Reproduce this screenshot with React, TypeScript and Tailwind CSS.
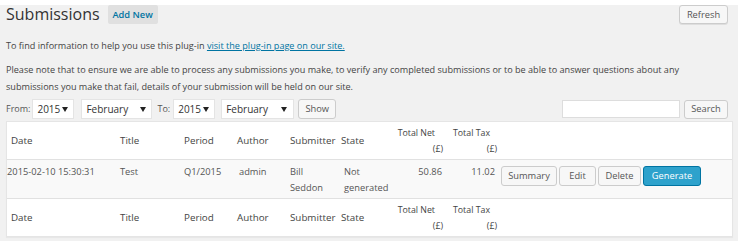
import React from 'react';

const font = { fontFamily: '"Open Sans", "Liberation Sans", sans-serif' };

const Select = ({ value, className }: { value: string; className: string }) => (
  <div className={`flex h-[20px] items-center bg-white border border-[#e4e4e4] pl-[4px] text-[10px] text-[#333] ${className}`}>
    <span>{value}</span>
    <svg className="ml-auto" width="6" height="5" viewBox="0 0 6 5">
      <path d="M0 0h6L3 5z" fill="#222" />
    </svg>
  </div>
);

const cols = 'grid grid-cols-[108px_64px_53px_53px_51px_59px_53px_52px_1fr]';

const HeadRow = () => (
  <div className={`${cols} h-[37px] items-center text-[9.8px] leading-[16px] text-[#444]`}>
    <div className="pl-[4px]">Date</div>
    <div className="pl-[5px]">Title</div>
    <div className="pl-[5px]">Period</div>
    <div className="pl-[5px]">Author</div>
    <div className="pl-[5px]">Submitter</div>
    <div className="pl-[5px]">State</div>
    <div className="flex flex-col items-end pr-[5px] text-[8.8px]">
      <span className="mr-[8px] whitespace-nowrap">Total Net</span>
      <span>(£)</span>
    </div>
    <div className="flex flex-col items-end pr-[3px] text-[8.8px]">
      <span className="mr-[7px] whitespace-nowrap">Total Tax</span>
      <span>(£)</span>
    </div>
    <div />
  </div>
);

const Button = ({ label, className }: { label: string; className: string }) => (
  <button className={`h-[20px] rounded-[3px] border text-[9.3px] leading-none ${className}`}>{label}</button>
);

export default function App() {
  return (
    <div style={font} className="min-h-[241px] w-full bg-[#f1f1f1] pl-[6px] pr-[5px] text-[#444]">
      <div className="mr-[5px] mt-[5px] flex h-[19px] items-center">
        <h2 className="text-[16px] leading-[19px] font-normal text-[#333]">Submissions</h2>
        <span className="ml-[8px] flex h-[19px] w-[50px] items-center justify-center rounded-[2px] bg-[#e0e0e0] text-[9.3px] font-semibold text-[#0074a2]">
          Add New
        </span>
        <button className="ml-auto h-[19px] w-[49px] rounded-[3px] border border-[#ccc] bg-[#f7f7f7] text-[9.3px] text-[#555] shadow-[0_1px_0_rgba(0,0,0,0.08)]">
          Refresh
        </button>
      </div>

      <p className="mr-[5px] mt-[13px] text-[9.1px] leading-[17px]">
        To find information to help you use this plug-in{' '}
        <a className="text-[#0074a2] underline">visit the plug-in page on our site.</a>
      </p>
      <p className="mr-[5px] mt-[7px] text-[9.1px] leading-[17px]">
        Please note that to ensure we are able to process any submissions you make, to verify any completed submissions or to be able to answer questions about any submissions you make that fail, details of your submission will be held on our site.
      </p>

      <div className="mr-[5px] mt-[4px] flex h-[20px] items-center text-[9px] text-[#555]">
        <span>From:</span>
        <Select value="2015" className="ml-[2px] w-[42px] pr-[5px]" />
        <Select value="February" className="ml-[7px] w-[71px] pr-[5px]" />
        <span className="ml-[5px]">To:</span>
        <Select value="2015" className="ml-[3px] w-[42px] pr-[5px]" />
        <Select value="February" className="ml-[6px] w-[73px] pr-[6px]" />
        <button className="ml-[4px] h-[20px] w-[38px] rounded-[3px] border border-[#ccc] bg-[#f7f7f7] text-[9.3px] text-[#555]">
          Show
        </button>
        <input className="ml-auto h-[18px] w-[118px] border border-[#ddd] bg-white" />
        <button className="ml-[4px] h-[19px] w-[44px] rounded-[3px] border border-[#ccc] bg-[#f7f7f7] text-[9.3px] text-[#555]">
          Search
        </button>
      </div>

      <div className="mt-[2px] border border-[#e5e5e5] bg-white shadow-[0_1px_1px_rgba(0,0,0,0.04)]">
        <HeadRow />
        <div className={`${cols} h-[40px] items-start border-y border-[#e1e1e1] bg-[#f9f9f9] text-[9.3px] leading-[16px] text-[#555]`}>
          <div className="pt-[4px]">2015-02-10 15:30:31</div>
          <div className="pl-[5px] pt-[4px]">Test</div>
          <div className="pl-[5px] pt-[4px]">Q1/2015</div>
          <div className="pl-[7px] pt-[4px]">admin</div>
          <div className="pl-[5px] pt-[4px]">Bill<br />Seddon</div>
          <div className="pl-[8px] pt-[4px]">Not<br />generated</div>
          <div className="pr-[6px] pt-[4px] text-right">50.86</div>
          <div className="pr-[5px] pt-[4px] text-right">11.02</div>
          <div className="flex gap-[2px] pl-[1px] pt-[6px]">
            <Button label="Summary" className="w-[56px] border-[#ccc] bg-[#f7f7f7] text-[#555]" />
            <Button label="Edit" className="w-[37px] border-[#ccc] bg-[#f7f7f7] text-[#555]" />
            <Button label="Delete" className="w-[43px] border-[#ccc] bg-[#f7f7f7] text-[#555]" />
            <Button label="Generate" className="w-[58px] border-[#0074a2] bg-[#2ea2cc] text-white" />
          </div>
        </div>
        <HeadRow />
      </div>
    </div>
  );
}
